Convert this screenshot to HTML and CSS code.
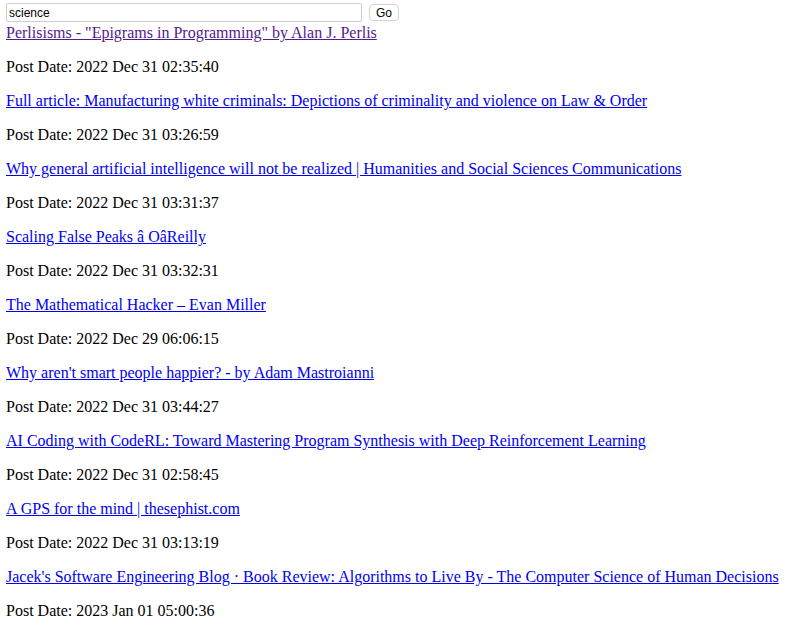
FILE: index.html
```html
<!DOCTYPE html>
<html>
<head>
<meta charset="utf-8">
<link rel="stylesheet" href="styles.css">
</head>
<body>
<form class="search"><input class="q" type="text" value="science"><button class="go" type="button">Go</button></form>
<a class="visited" href="#">Perlisisms - "Epigrams in Programming" by Alan J. Perlis</a>
<p>Post Date: 2022 Dec 31 02:35:40</p>
<a href="#">Full article: Manufacturing white criminals: Depictions of criminality and violence on Law &amp; Order</a>
<p>Post Date: 2022 Dec 31 03:26:59</p>
<a href="#">Why general artificial intelligence will not be realized | Humanities and Social Sciences Communications</a>
<p>Post Date: 2022 Dec 31 03:31:37</p>
<a href="#">Scaling False Peaks â OâReilly</a>
<p>Post Date: 2022 Dec 31 03:32:31</p>
<a href="#">The Mathematical Hacker – Evan Miller</a>
<p>Post Date: 2022 Dec 29 06:06:15</p>
<a href="#">Why aren't smart people happier? - by Adam Mastroianni</a>
<p>Post Date: 2022 Dec 31 03:44:27</p>
<a href="#">AI Coding with CodeRL: Toward Mastering Program Synthesis with Deep Reinforcement Learning</a>
<p>Post Date: 2022 Dec 31 02:58:45</p>
<a href="#">A GPS for the mind | thesephist.com</a>
<p>Post Date: 2022 Dec 31 03:13:19</p>
<a href="#">Jacek's Software Engineering Blog · Book Review: Algorithms to Live By - The Computer Science of Human Decisions</a>
<p>Post Date: 2023 Jan 01 05:00:36</p>
</body>
</html>
```
FILE: styles.css
```css
body {
  margin: 3px 6px;
  font-family: "Liberation Serif", "Times New Roman", serif;
  font-size: 16px;
  line-height: 18px;
  color: #000;
  background: #fff;
}
a { color: #0000ee; }
a.visited { color: #551a8b; }
p { margin: 16px 0; }
.search {
  margin: 0 0 2px 0;
  display: flex;
  align-items: center;
  gap: 7px;
  height: 19px;
}
.q {
  box-sizing: border-box;
  width: 356px;
  height: 19px;
  margin: 0;
  padding: 0 2px;
  border: 1px solid #cfcfcf;
  border-radius: 2px;
  font-family: "Liberation Sans", Arial, sans-serif;
  font-size: 12px;
  color: #000;
  background: #fff;
}
.go {
  box-sizing: border-box;
  width: 30px;
  height: 17px;
  margin: 0;
  padding: 0;
  border: 1px solid #d4d4d4;
  border-radius: 4px;
  background: #fff;
  font-family: "Liberation Sans", Arial, sans-serif;
  font-size: 12px;
  color: #000;
}
```
